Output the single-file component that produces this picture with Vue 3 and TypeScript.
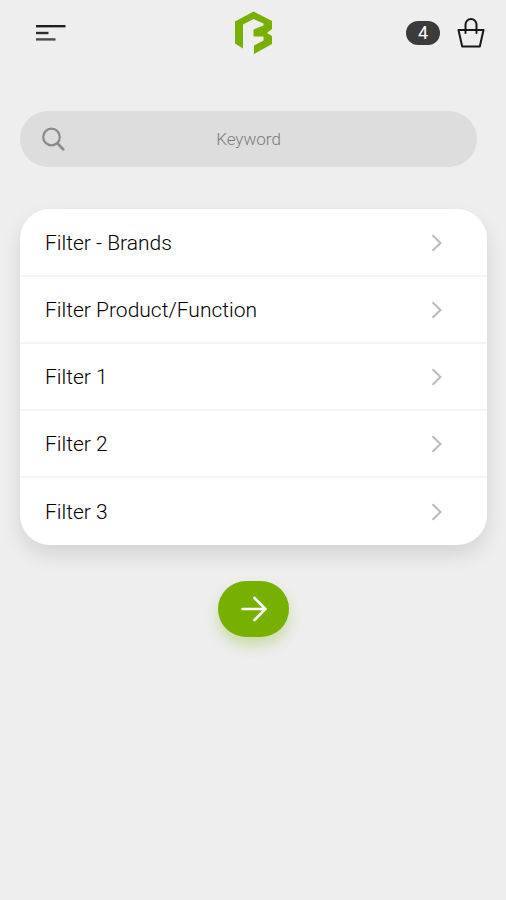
<script setup lang="ts">
import { ref } from 'vue'

interface Filter {
  id: string
  label: string
}

const filters: Filter[] = [
  { id: 'brands', label: 'Filter - Brands' },
  { id: 'product', label: 'Filter Product/Function' },
  { id: 'f1', label: 'Filter 1' },
  { id: 'f2', label: 'Filter 2' },
  { id: 'f3', label: 'Filter 3' },
]

const keyword = ref('')
const cartCount = ref(4)
</script>

<template>
  <div class="screen">
    <header class="topbar">
      <button class="menu" type="button" aria-label="Menu">
        <svg width="30" height="18" viewBox="0 0 30 18" fill="none" stroke-width="2.4">
          <path d="M0 2.2H29.5" stroke="#1c1f1e" />
          <path d="M0 9H12.5" stroke="#2c2e2d" />
          <path d="M0 15.4H19.5" stroke="#4a4a4a" />
        </svg>
      </button>
      <a class="logo" href="#" aria-label="Home">
        <svg width="38" height="44" viewBox="0 0 38 44" fill="#78b000">
          <path d="M0 10.500 18.500 0.500 37 10V18L32 22 37 25V33L19 43V34.500L28.500 29.500V25.500L18.500 25.500V18.500L28.500 14.500V12.500L18.500 8 8 13.500V37.500L0 32.500Z" />
        </svg>
      </a>
      <a class="cart" href="#" aria-label="Basket">
        <span class="count">{{ cartCount }}</span>
        <svg width="28" height="32" viewBox="0 0 28 32" fill="none" stroke="#171717" stroke-width="2">
          <path d="M1.500 13H26.500L22.800 29.500H5.200Z" stroke-linejoin="round" />
          <path d="M8.500 16V7.500a5.500 5.500 0 0 1 11 0V16" stroke-linecap="round" />
        </svg>
      </a>
    </header>

    <form class="filter-form" @submit.prevent>
      <label class="search">
        <svg width="24" height="24" viewBox="0 0 24 24" fill="none" stroke="#8b8b8b" stroke-width="2.200">
          <circle cx="9.500" cy="10" r="8.300" />
          <path d="M15.200 16 22 23.200" stroke-width="2.600" />
        </svg>
        <input v-model="keyword" type="text" placeholder="Keyword" aria-label="Keyword" />
      </label>

      <ul class="filters">
        <li v-for="filter in filters" :key="filter.id">
          <button class="filter" type="button">
            <span>{{ filter.label }}</span>
            <svg width="12" height="18" viewBox="0 0 12 18" fill="none" stroke="#bbbbbb" stroke-width="2">
              <path d="M1.500 1.200 9.500 9 1.500 16.800" />
            </svg>
          </button>
        </li>
      </ul>

      <button class="submit" type="submit" aria-label="Apply filters">
        <svg width="26" height="26" viewBox="0 0 26 26" fill="none" stroke="#ffffff" stroke-width="2.600" stroke-linecap="round">
          <path d="M1.500 13H24.500M13.500 2 24.500 13 13.500 24" />
        </svg>
      </button>
    </form>
  </div>
</template>

<style>
body {
  background: #eeeeee;
}
</style>

<style scoped>
.screen {
  min-height: 100vh;
  background: #eeeeee;
  font-family: Roboto, "Liberation Sans", sans-serif;
  color: #000000;
}

svg {
  display: block;
  flex: none;
}

button {
  border: 0;
  padding: 0;
  background: none;
  color: inherit;
  font: inherit;
  cursor: pointer;
}

.topbar {
  display: grid;
  grid-template-columns: 1fr auto 1fr;
  align-items: center;
  height: 66px;
  padding: 0 21px 0 36px;
}

.menu {
  justify-self: start;
}

.logo {
  margin-right: 14px;
}

.cart {
  display: flex;
  align-items: center;
  justify-self: end;
  gap: 17px;
  color: inherit;
  text-decoration: none;
}

.count {
  width: 34px;
  border-radius: 12px;
  background: #3b3b3b;
  color: #ffffff;
  font-size: 18px;
  line-height: 24px;
  text-align: center;
}

.filter-form {
  display: flex;
  flex-direction: column;
  padding: 45px 19px 0 20px;
}

.search {
  display: flex;
  align-items: center;
  height: 56px;
  margin-right: 10px;
  padding: 0 22px;
  border-radius: 28px;
  background: #dddddd;
  color: #8b8b8b;
}

.search input {
  flex: 1;
  min-width: 0;
  margin-right: 24px;
  padding: 0;
  border: 0;
  outline: 0;
  background: none;
  color: #555555;
  font: inherit;
  font-size: 17px;
  font-weight: 300;
  text-align: center;
}

.search input::placeholder {
  color: #7c7c7c;
  opacity: 1;
}

.filters {
  margin: 42px 0 0;
  padding: 1px 0 0;
  border-radius: 30px;
  background: #ffffff;
  box-shadow: 0 10px 20px rgba(0, 0, 0, 0.11);
  list-style: none;
}

.filter {
  display: flex;
  align-items: center;
  justify-content: space-between;
  box-sizing: border-box;
  width: 100%;
  height: 67px;
  padding: 0 44px 0 25px;
  font-size: 21px;
  font-weight: 300;
  text-align: left;
}

.filters li:not(:last-child) .filter {
  border-bottom: 2px solid #f5f5f5;
}

.submit {
  display: grid;
  place-items: center;
  align-self: center;
  width: 71px;
  height: 56px;
  margin-top: 36px;
  border-radius: 28px;
  background: #78b000;
  box-shadow: 0 8px 14px rgba(120, 176, 0, 0.3);
}
</style>
